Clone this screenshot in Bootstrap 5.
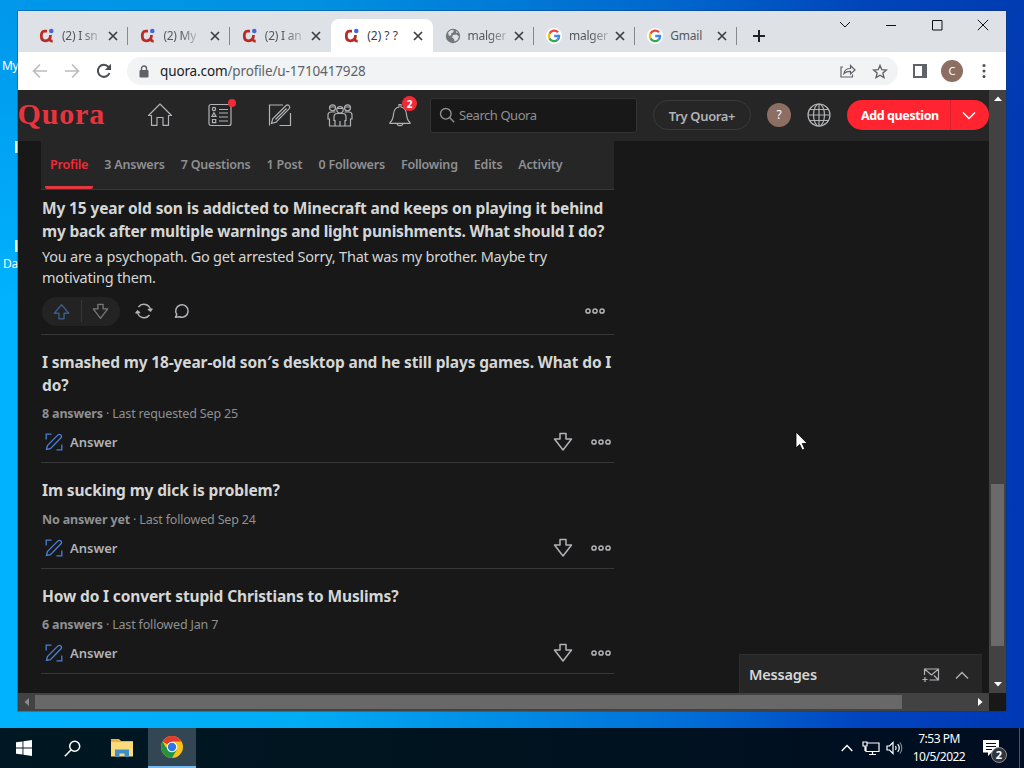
<!DOCTYPE html>
<html lang="en">
<head>
  <meta charset="UTF-8">
  <meta name="viewport" content="width=device-width, initial-scale=1">
  <title>Profile - Quora</title>
  <link href="https://cdn.jsdelivr.net/npm/bootstrap@5.3.3/dist/css/bootstrap.min.css" rel="stylesheet">
  <style>
    body {
      width: 1024px;
      height: 768px;
      overflow: hidden;
      font-family: "Noto Sans", "Open Sans", sans-serif;
      font-size: 13px;
      line-height: 1.2;
      white-space: nowrap;
      background: #000;
      stroke: currentColor;
    }
    svg { display: block; flex: none; fill: none; }

    /* desktop */
    .desktop {
      height: 728px;
      background:
        linear-gradient(to bottom, rgba(0, 70, 170, .25), rgba(0, 70, 170, 0) 300px),
        linear-gradient(to right, #00b2ff 0, #00acf4 300px, #0090e8 480px, #0070d8 680px, #0045c0 860px, #0038b4 1024px);
    }
    .desk-label { position: absolute; color: #fff; font-size: 12px; letter-spacing: -.3px; }
    .desk-bit { position: absolute; left: 15px; width: 3px; height: 12px; background: #e8f4ff; }

    /* browser window */
    .browser { position: absolute; left: 18px; top: 11px; width: 988px; height: 700px; background: #181818; box-shadow: 0 0 0 1px rgba(20, 50, 90, .35); }
    .tabstrip { height: 41px; background: #dee1e6; padding: 8px 0 0 9px; }
    .btab { width: 101.4px; height: 33px; padding: 0 10px 0 12px; color: #55595e; position: relative; font-size: 12px; letter-spacing: -.25px; }
    .btab.split::after { content: ""; position: absolute; right: 0; top: 8px; width: 1px; height: 18px; background: #85888d; }
    .btab.on { background: #fff; border-radius: 8px 8px 0 0; color: #3c4043; padding-left: 13px; letter-spacing: 0; }
    .btab svg { color: #3c4043; }
    .btitle { margin-left: 7px; padding-top: 1px; }
    .fade-end { -webkit-mask-image: linear-gradient(to right, #000 55%, rgba(0, 0, 0, .3)); }
    .winctl { width: 46px; height: 28px; color: #111; margin-top: -8px; }
    .toolbar { height: 38px; background: #fff; color: #5f6368; padding: 0 14px 0 14px; }
    .omnibox { width: 771px; height: 28px; border-radius: 14px; background: #f1f3f4; margin-left: 14px; padding: 0 10px 0 12px; font-size: 13.5px; letter-spacing: -.13px; }
    .omnibox b { color: #202124; font-weight: 400; }
    .initial { width: 22px; height: 22px; border-radius: 50%; background: #8d6e63; color: #fff; font-size: 11px; }

    /* quora */
    .q-page { width: 971px; height: 603px; color: #d5d6d6; overflow: hidden; position: relative; }
    .q-head { height: 51px; background: #262626; color: #b1b3b6; padding-bottom: 1px; }
    .q-logo { font: bold 30px/30px "Liberation Serif", serif; color: #e8343f; width: 112px; letter-spacing: .85px; text-indent: -.5px; padding-bottom: 3px; }
    .q-ico { width: 60px; position: relative; }
    .q-dot { position: absolute; background: #f52936; border-radius: 50%; color: #fff; }
    .q-search { width: 207px; height: 35px; background: #181818; border: 1px solid #333; border-radius: 3px; color: #8e9093; font-size: 13px; letter-spacing: -.45px; padding-left: 8px; }
    .q-try { width: 98px; height: 30px; border: 1px solid #393a3b; border-radius: 15px; font-weight: 600; font-size: 13px; letter-spacing: -.35px; }
    .q-add { width: 142px; height: 30px; border-radius: 15px; background: #ff242f; color: #fff; font-weight: 700; font-size: 12.5px; }
    .q-add span { width: 104px; height: 30px; line-height: 32px; padding-left: 14px; border-right: 1px solid #d81f2a; letter-spacing: -.4px; }
    .q-nav { width: 573px; height: 49px; margin-left: 23px; background: #262626; border-bottom: 1px solid #393839; padding-left: 4px; font-weight: 600; font-size: 12.5px; color: #8e9093; letter-spacing: -.2px; }
    .q-nav a { color: inherit; text-decoration: none; padding: 16px 5px 0; height: 48px; margin-right: 6px; }
    .q-nav a.on { color: #f52936; border-bottom: 3px solid #e03a40; border-radius: 2px; }
    .q-feed { width: 573px; margin-left: 23px; }
    .q-post { border-bottom: 1px solid #393839; padding-left: 1px; }
    .q-title { font-weight: 700; font-size: 15.5px; line-height: 23px; letter-spacing: -.14px; }
    .q-text { font-size: 14.5px; line-height: 21px; letter-spacing: -.22px; }
    .q-meta { font-size: 12.5px; color: #8e9093; line-height: 18px; letter-spacing: -.17px; }
    .q-act { height: 30px; color: #b1b3b6; font-size: 13px; font-weight: 600; padding-right: 3px; }
    .q-act .answer { margin-left: 7px; padding-top: 1px; }
    .q-pill { width: 78px; height: 29px; border-radius: 15px; background: #232324; padding: 0 11px; }
    .q-msg { position: absolute; right: 7px; bottom: 0; width: 243px; height: 39px; background: #262626; border-top: 1px solid #2f2f30; border-left: 1px solid #2f2f30; padding: 2px 13px 0 9px; font-size: 14.5px; font-weight: 600; letter-spacing: -.2px; }

    /* scrollbars */
    .vbar { width: 17px; height: 603px; background: #424242; padding: 6px 0; }
    .vbar i { display: block; width: 13px; height: 162px; background: #6a6a6a; }
    .hbar { width: 971px; height: 18px; background: #424242; }
    .hbar i { display: block; width: 867px; height: 14px; background: #686868; }
    .pointer { position: absolute; left: 795px; top: 431px; }

    /* taskbar */
    .taskbar { height: 40px; background: linear-gradient(to right, #001823, #00131f 50%, #000d22); color: #fff; }
    .tb { width: 48px; height: 40px; }
    .tb.on { background: #324653; border-bottom: 2px solid #76b9ed; }
    .clock { width: 72px; font-size: 12px; line-height: 18px; letter-spacing: -.5px; }
  </style>
</head>
<body>

  <svg width="0" height="0" class="position-absolute">
    <symbol id="x" viewBox="0 0 10 10"><path d="M1 1l8 8M9 1l-8 8" stroke-width="1.700"/></symbol>
    <symbol id="fav-q" viewBox="0 0 16 16">
      <path d="M8 3.200H5.500C3 3.200 2.300 5.500 2.300 8s1.200 4.800 4.200 4.800c3.500 0 5-2.300 5-5.800M10.700 9.500c0 2.700.8 3.700 3 3.600" stroke="#b92b27" stroke-width="2.800"/>
      <circle cx="12.300" cy="3" r="2.300" fill="#4468d8" stroke="none"/>
    </symbol>
    <symbol id="fav-g" viewBox="0 0 16 16">
      <circle cx="8" cy="8" r="8" fill="#fff" stroke="none"/>
      <g stroke-width="2.300">
        <path d="M12 4.300A5.100 5.100 0 0 0 3.500 5.600" stroke="#ea4335"/>
        <path d="M3.500 5.600a5.100 5.100 0 0 0 0 4.800" stroke="#fbbc05"/>
        <path d="M3.500 10.400a5.100 5.100 0 0 0 8 1.400" stroke="#34a853"/>
        <path d="M11.500 11.800A5 5 0 0 0 13.100 8H8.200" stroke="#4285f4"/>
      </g>
    </symbol>
    <symbol id="pen" viewBox="0 0 24 24">
      <path d="M15 2H1.500v20.500M11.500 22.500h11V10"/>
      <path d="M3.500 20.500l1.200-4.700L18 2.500c2-1.800 5 1 3.200 3.200L8 19.200zM7.500 16.500L18.500 5.500"/>
    </symbol>
    <symbol id="pen-blue" viewBox="0 0 18 18">
      <path d="M6.500 1.200H1.200V6.500M11.500 16.800h5.300V11.500"/>
      <path d="M1.500 16.500l.9-4L13 1.900c1.800-1.600 4.600.8 3 2.900L5.400 15.600z"/>
    </symbol>
    <symbol id="down" viewBox="0 0 20 20"><path d="M7 1.500h6v5.500h5.500L10 18 1.500 7H7z" stroke-width="1.500" stroke-linejoin="round"/></symbol>
    <symbol id="dots" viewBox="0 0 20 8"><g stroke-width="1.500"><circle cx="3" cy="4" r="2.100"/><circle cx="10" cy="4" r="2.100"/><circle cx="17" cy="4" r="2.100"/></g></symbol>
  </svg>

  <div class="desktop position-relative">
    <span class="desk-label" style="left:2px;top:59px">My</span>
    <span class="desk-label" style="left:3px;top:257px">Da</span>
    <i class="desk-bit" style="top:141px"></i>
    <i class="desk-bit" style="top:240px"></i>

    <div class="browser">
      <!-- tab strip -->
      <div class="tabstrip d-flex">
        <div class="btab split d-flex align-items-center"><svg width="16" height="16"><use href="#fav-q"/></svg><span class="btitle fade-end">(2) I sn</span><svg class="ms-auto" width="10" height="10"><use href="#x"/></svg></div>
        <div class="btab split d-flex align-items-center"><svg width="16" height="16"><use href="#fav-q"/></svg><span class="btitle fade-end">(2) My</span><svg class="ms-auto" width="10" height="10"><use href="#x"/></svg></div>
        <div class="btab d-flex align-items-center"><svg width="16" height="16"><use href="#fav-q"/></svg><span class="btitle fade-end">(2) I an</span><svg class="ms-auto" width="10" height="10"><use href="#x"/></svg></div>
        <div class="btab on d-flex align-items-center"><svg width="16" height="16"><use href="#fav-q"/></svg><span class="btitle">(2) ? ?</span><svg class="ms-auto" width="10" height="10"><use href="#x"/></svg></div>
        <div class="btab split d-flex align-items-center">
          <svg width="16" height="16" viewBox="0 0 16 16" stroke="none"><circle cx="8" cy="8" r="7.200" fill="#74777b"/><path d="M3 4.500l3-2.500 3 .5-1 2-2 1 .5 1.500-2.500 1zM8 7l3.500-.5 2.500 2-1.500 3.500-3 1.500-.5-2.500-2-1.500zM11 2.800l2 1.700-1.500.8z" fill="#dee1e6"/></svg>
          <span class="btitle fade-end">malger</span><svg class="ms-auto" width="10" height="10"><use href="#x"/></svg></div>
        <div class="btab split d-flex align-items-center"><svg width="16" height="16"><use href="#fav-g"/></svg><span class="btitle fade-end">malger</span><svg class="ms-auto" width="10" height="10"><use href="#x"/></svg></div>
        <div class="btab split d-flex align-items-center"><svg width="16" height="16"><use href="#fav-g"/></svg><span class="btitle">Gmail</span><svg class="ms-auto" width="10" height="10"><use href="#x"/></svg></div>
        <svg class="ms-3 mt-2" width="12" height="18" viewBox="0 0 12 18" stroke="#202124" stroke-width="2"><path d="M6 3v12M0 9h12"/></svg>
        <div class="d-flex ms-auto">
          <div class="winctl d-flex align-items-center justify-content-center"><svg width="12" height="8" viewBox="0 0 12 8"><path d="M1 1l5 5 5-5"/></svg></div>
          <div class="winctl d-flex align-items-center justify-content-center"><svg width="12" height="11" viewBox="0 0 12 11"><path d="M1 5.500h10"/></svg></div>
          <div class="winctl d-flex align-items-center justify-content-center"><svg width="11" height="11" viewBox="0 0 11 11"><path d="M.5.5h9.500v9.500H.5z"/></svg></div>
          <div class="winctl d-flex align-items-center justify-content-center"><svg width="12" height="12" viewBox="0 0 12 12"><path d="M.8.8l10.400 10.400M11.200.8L.8 11.200"/></svg></div>
        </div>
      </div>

      <!-- address bar -->
      <div class="toolbar d-flex align-items-center">
        <svg width="16" height="16" viewBox="0 0 16 16" stroke="#babcbe" stroke-width="1.700"><path d="M15 8H2M8 1.500L1.500 8 8 14.500"/></svg>
        <svg style="margin-left:16px" width="16" height="16" viewBox="0 0 16 16" stroke="#babcbe" stroke-width="1.700"><path d="M1 8h13M8 1.500L14.500 8 8 14.500"/></svg>
        <svg style="margin-left:16px" width="16" height="16" viewBox="0 0 16 16" stroke="#4a4d51" stroke-width="2"><path d="M13.500 10A6 6 0 1 1 12.500 4l1 1"/><path d="M15 .8v6.200H8.800z" fill="#4a4d51" stroke="none"/></svg>
        <div class="omnibox d-flex align-items-center" style="margin-left:15px">
          <svg width="10" height="13" viewBox="0 0 10 13"><path d="M2.500 6V3.500a2.500 2.500 0 0 1 5 0V6" stroke-width="1.400"/><rect x=".5" y="5" width="9" height="7.500" rx="1" fill="#5f6368" stroke="none"/></svg>
          <span style="margin-left:11px"><b>quora.com</b>/profile/u-1710417928</span>
          <svg class="ms-auto" width="16" height="14" viewBox="0 0 16 14" stroke-width="1.200"><path d="M3 3H1v10h11.500v-2.500M4 9.500c.5-3.500 3-5 6.500-5V1.500L15 6l-4.500 4V7.300C8 7.200 6 7.500 4 9.500z"/></svg>
          <svg style="margin-left:16px" width="16" height="15" viewBox="0 0 16 15" stroke-width="1.400"><path d="M8 1.500l1.800 4.200 4.500.4-3.400 3 1 4.400L8 11.200l-3.900 2.300 1-4.400-3.400-3 4.500-.4z"/></svg>
        </div>
        <svg style="margin-left:15px" width="14" height="14" viewBox="0 0 14 14"><path d="M1 1h12v12H1z" stroke-width="2"/><path d="M9 1h5v12H9z" fill="#5f6368" stroke="none"/></svg>
        <div class="initial d-flex align-items-center justify-content-center" style="margin-left:14px">C</div>
        <svg class="ms-auto" width="16" height="16" viewBox="0 0 16 16" stroke="none"><g fill="#4a4d51"><circle cx="8" cy="2.500" r="1.500"/><circle cx="8" cy="8" r="1.500"/><circle cx="8" cy="13.500" r="1.500"/></g></svg>
      </div>

      <div class="d-flex">
        <div class="q-page">
          <!-- site header -->
          <div class="q-head d-flex align-items-center">
            <span class="q-logo">Quora</span>
            <div class="q-ico d-flex justify-content-center"><svg width="24" height="24" viewBox="0 0 24 24" stroke-width="1.200"><path d="M3.500 12.500v9.800h5.500v-7.800h6v7.800h5.500v-9.800h3L12 1 .5 12.500z" stroke-linejoin="round"/></svg></div>
            <div class="q-ico d-flex justify-content-center"><svg width="24" height="24" viewBox="0 0 24 24" stroke-width="1.200"><rect x="1" y="1.500" width="22" height="21" rx="2"/><circle cx="6" cy="6" r="1.600"/><path d="M6 9.800l2 3.500H4zM4.500 16.500h3.200v3.200H4.500zM11 6.500h9M11 10h9M11 14h9M11 18h9"/></svg><i class="q-dot" style="left:38px;top:-4px;width:8px;height:8px"></i></div>
            <div class="q-ico d-flex justify-content-center"><svg width="24" height="24" stroke-width="1.200"><use href="#pen"/></svg></div>
            <div class="q-ico d-flex justify-content-center"><svg width="26" height="24" viewBox="0 0 26 24" stroke-width="1.200"><circle cx="5.500" cy="4.800" r="3"/><circle cx="20.500" cy="4.800" r="3"/><circle cx="13" cy="6.800" r="3.200"/><path d="M2.500 4h5M18 4h5.500M10 5.500h6M8 23v-5.500H7V14c0-2 1.500-3.500 3.500-3.500h5c2 0 3.500 1.500 3.500 3.500v3.500h-1V23zM13 18v5M8.500 9H4C2 9 1 10.500 1 12v4h1.500v7H8M17.500 9H22c2 0 3 1.500 3 3v4h-1.500v7H18"/></svg></div>
            <div class="q-ico d-flex justify-content-center"><svg width="24" height="24" viewBox="0 0 24 24" stroke-width="1.200"><path d="M2 19.500c2-1.500 3-3.500 3.500-8 .3-4 2-7 5.500-7.500V1.500h2V4c3.500.5 5.200 3.500 5.500 7.500.5 4.500 1.500 6.500 3.500 8v.8H2zM9 20.500c.5 2.800 5.500 2.800 6 0"/></svg><b class="q-dot d-flex align-items-center justify-content-center" style="left:32px;top:-7px;width:15px;height:15px;font-size:10px">2</b></div>
            <div class="q-search d-flex align-items-center"><svg width="16" height="16" viewBox="0 0 16 16" stroke-width="1.400"><circle cx="6.800" cy="6.800" r="5.300"/><path d="M10.600 10.600l4.600 4.600"/></svg><span style="margin-left:4px;padding-top:2px">Search Quora</span></div>
            <div class="q-try d-flex align-items-center justify-content-center ms-3"><span style="padding-top:3px">Try Quora+</span></div>
            <div class="initial d-flex align-items-center justify-content-center ms-3" style="width:24px;height:24px;font-size:12px">?</div>
            <svg class="ms-3" width="24" height="24" viewBox="0 0 24 24" stroke-width="1.200"><circle cx="12" cy="12" r="11"/><ellipse cx="12" cy="12" rx="5.500" ry="11"/><path d="M12 1v22M1 12h22M3 6.500h18M3 17.500h18"/></svg>
            <div class="q-add d-flex align-items-center ms-3"><span>Add question</span><svg style="margin-left:11px" width="14" height="9" viewBox="0 0 14 9" stroke-width="1.500"><path d="M1 1.500l6 6 6-6"/></svg></div>
          </div>

          <!-- profile nav -->
          <div class="q-nav d-flex">
            <a class="on">Profile</a><a>3 Answers</a><a>7 Questions</a><a>1 Post</a><a>0 Followers</a><a>Following</a><a>Edits</a><a>Activity</a>
          </div>

          <!-- feed -->
          <div class="q-feed">
            <div class="q-post" style="height:145px;padding-top:7px">
              <div class="q-title">My 15 year old son is addicted to Minecraft and keeps on playing it behind<br><span style="letter-spacing:-.2px">my back after multiple warnings and light punishments. What should I do?</span></div>
              <div class="q-text" style="margin-top:3px">You are a psychopath. Go get arrested Sorry, That was my brother. Maybe try<br>motivating them.</div>
              <div class="q-act d-flex align-items-center" style="margin-top:8px;padding-right:9px">
                <div class="q-pill d-flex align-items-center justify-content-between">
                  <svg width="17" height="17" viewBox="0 0 20 20" stroke="#3c5a86" stroke-width="1.700"><path d="M7 18.500h6V12h5.500L10 2 1.500 12H7z" stroke-linejoin="round"/></svg>
                  <i style="width:1px;height:22px;background:#393839"></i>
                  <svg width="17" height="17" opacity=".6"><use href="#down"/></svg>
                </div>
                <svg style="margin-left:15px" width="18" height="18" viewBox="0 0 18 18" stroke-width="1.500"><path d="M3.500 5A6.700 6.700 0 0 1 15.500 8M2.500 10A6.700 6.700 0 0 0 14.500 13M.7 11.500l1.800-2.500 2.500 1.800M13 7.200l2.500 1.800 1.800-2.500"/></svg>
                <svg style="margin-left:21px" width="16" height="16" viewBox="0 0 16 16" stroke-width="1.500"><path d="M1.500 14.200l1.300-2.700A6.200 6.200 0 1 1 5.500 13.700z" stroke-linejoin="round"/></svg>
                <svg class="ms-auto" width="20" height="8"><use href="#dots"/></svg>
              </div>
            </div>
            <div class="q-post" style="height:128px;padding-top:16px">
              <div class="q-title">I smashed my 18-year-old son′s desktop and he still plays games. What do I<br>do?</div>
              <div class="q-meta" style="margin-top:8px"><b>8 answers</b> · Last requested Sep 25</div>
              <div class="q-act d-flex align-items-center" style="margin-top:4px"><svg style="margin-left:3px" width="18" height="18" stroke="#4a7fd6" stroke-width="1.300"><use href="#pen-blue"/></svg><span class="answer">Answer</span><svg class="ms-auto" width="20" height="20"><use href="#down"/></svg><svg style="margin-left:18px" width="20" height="8"><use href="#dots"/></svg></div>
            </div>
            <div class="q-post" style="height:106px;padding-top:16px">
              <div class="q-title">Im sucking my dick is problem?</div>
              <div class="q-meta" style="margin-top:9px"><b>No answer yet</b> · Last followed Sep 24</div>
              <div class="q-act d-flex align-items-center" style="margin-top:4px"><svg style="margin-left:3px" width="18" height="18" stroke="#4a7fd6" stroke-width="1.300"><use href="#pen-blue"/></svg><span class="answer">Answer</span><svg class="ms-auto" width="20" height="20"><use href="#down"/></svg><svg style="margin-left:18px" width="20" height="8"><use href="#dots"/></svg></div>
            </div>
            <div class="q-post" style="height:105px;padding-top:16px">
              <div class="q-title">How do I convert stupid Christians to Muslims?</div>
              <div class="q-meta" style="margin-top:8px"><b>6 answers</b> · Last followed Jan 7</div>
              <div class="q-act d-flex align-items-center" style="margin-top:4px"><svg style="margin-left:3px" width="18" height="18" stroke="#4a7fd6" stroke-width="1.300"><use href="#pen-blue"/></svg><span class="answer">Answer</span><svg class="ms-auto" width="20" height="20"><use href="#down"/></svg><svg style="margin-left:18px" width="20" height="8"><use href="#dots"/></svg></div>
            </div>
          </div>

          <div class="q-msg d-flex align-items-center">
            <span>Messages</span>
            <svg class="ms-auto" width="18" height="16" viewBox="0 0 18 16" stroke="#b1b3b6" stroke-width="1.200"><path d="M2.500 8V2h14v11H7.500M2.500 2l7 6 7-6M12 8.500l4.500 4.500M3 10v5M.5 12.500h5"/></svg>
            <svg style="margin-left:15px" width="14" height="9" viewBox="0 0 14 9" stroke="#b1b3b6" stroke-width="1.400"><path d="M1 7.500l6-6 6 6"/></svg>
          </div>
        </div>
        <div class="vbar d-flex flex-column align-items-center">
          <svg width="8" height="5" viewBox="0 0 8 5" stroke="none"><path d="M0 5l4-4.500L8 5z" fill="#fff"/></svg>
          <i style="margin-top:383px"></i>
          <svg class="mt-auto" width="8" height="5" viewBox="0 0 8 5" stroke="none"><path d="M0 0l4 4.500L8 0z" fill="#fff"/></svg>
        </div>
      </div>
      <div class="hbar d-flex align-items-center">
        <svg style="margin-left:6px" width="5" height="8" viewBox="0 0 5 8" stroke="none"><path d="M5 0L.5 4 5 8z" fill="#8a8a8a"/></svg>
        <i style="margin-left:6px"></i>
        <svg class="ms-auto" style="margin-right:5px" width="6" height="8" viewBox="0 0 6 8" stroke="none"><path d="M0 0l4.500 4L0 8z" fill="#fff"/></svg>
      </div>
    </div>

    <svg class="pointer" width="13" height="20" viewBox="0 0 13 20"><path d="M1 1v16l3.700-3.500 2.500 5.500 2.500-1.100-2.400-5.400h5z" fill="#fff" stroke="#000" stroke-width=".8"/></svg>
  </div>

  <!-- taskbar -->
  <div class="taskbar d-flex">
    <div class="tb d-flex align-items-center justify-content-center"><svg width="16" height="16" viewBox="0 0 16 16" stroke="none"><path d="M0 2.300L6.500 1.400v6.200H0zM7.400 1.200L16 0v7.600H7.400zM0 8.400h6.500v6.200L0 13.700zM7.400 8.400H16V16l-8.600-1.200z" fill="#fff"/></svg></div>
    <div class="tb d-flex align-items-center justify-content-center"><svg width="17" height="17" viewBox="0 0 17 17" stroke-width="1.500"><circle cx="10.700" cy="6.200" r="5"/><path d="M7.200 9.800L.8 16.200"/></svg></div>
    <div class="tb d-flex align-items-center justify-content-center" style="width:52px"><svg width="22" height="20" viewBox="0 0 22 20" stroke="none"><path d="M0 1h8l2 2h12v15H0z" fill="#e8b541"/><path d="M0 4h22v14.500H0z" fill="#fcdc7a"/><path d="M4 11.500h14V19h-4.500v-3.500h-5V19H4z" fill="#3d8fc8"/></svg></div>
    <div class="tb on d-flex align-items-center justify-content-center">
      <svg width="22" height="22" viewBox="0 0 22 22" stroke="none">
        <circle cx="11" cy="11" r="11" fill="#fbc116"/>
        <path d="M11 11L1.500 5.500A11 11 0 0 1 20.500 5.500H11z" fill="#e33b2e"/>
        <path d="M1.500 5.500A11 11 0 0 0 11 22l4.800-8.300L11 11H4.600z" fill="#229342"/>
        <circle cx="11" cy="11" r="5.300" fill="#fff"/><circle cx="11" cy="11" r="4.200" fill="#2f76e4"/>
      </svg>
    </div>
    <div class="d-flex align-items-center ms-auto">
      <svg width="12" height="8" viewBox="0 0 12 8" stroke-width="1.400"><path d="M.7 7L6 1.500 11.300 7"/></svg>
      <svg style="margin-left:9px" width="18" height="16" viewBox="0 0 18 16" stroke-width="1.200"><path d="M5.500 3H17v8.500H4V7M10.500 11.500v3M7 14.500h7M1 2h4v4H1zM3 6v5"/></svg>
      <svg style="margin-left:6px" width="17" height="14" viewBox="0 0 17 14" stroke-width="1.200"><path d="M1 5h2.500L7 1.500v11L3.500 9H1zM9.500 5c.8 1.200.8 2.800 0 4M11.700 3.200c1.800 2.200 1.800 5.400 0 7.600"/><path d="M13.900 1.500c2.500 3.200 2.500 7.800 0 11" opacity=".5"/></svg>
      <div class="clock text-center">7:53 PM<br>10/5/2022</div>
      <div class="position-relative" style="margin-left:8px">
        <svg width="17" height="17" viewBox="0 0 17 17"><path d="M0 0h16v12.500H8.500L5 16v-3.500H0z" fill="#fff" stroke="none"/><path d="M3 3.500h10M3 6.500h10M3 9.500h6" stroke="#000d22"/></svg>
        <b class="position-absolute rounded-circle d-flex align-items-center justify-content-center" style="left:8px;top:7px;width:16px;height:16px;background:#30343b;border:1px solid #8b8e94;font-size:11px">2</b>
      </div>
      <i style="width:1px;height:40px;background:#4c5668;margin:0 4px 0 19px"></i>
    </div>
  </div>

  <script src="https://cdn.jsdelivr.net/npm/bootstrap@5.3.3/dist/js/bootstrap.bundle.min.js"></script>
</body>
</html>
